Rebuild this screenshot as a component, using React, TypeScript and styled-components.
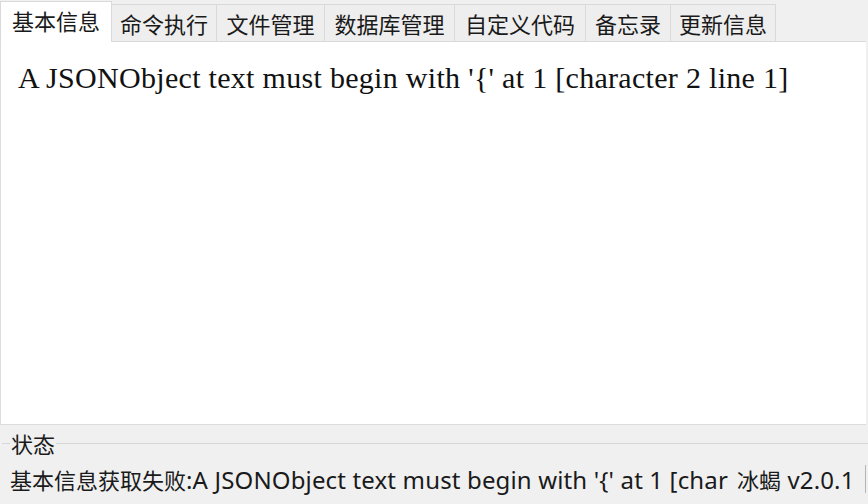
import React from "react";
import styled, { createGlobalStyle } from "styled-components";

const Global = createGlobalStyle`
  html, body { margin: 0; padding: 0; background: #f0f0f0; }
  body { width: 868px; height: 504px; overflow: hidden; }
`;

const Frame = styled.div`
  width: 868px;
  height: 504px;
  display: flex;
  flex-direction: column;
  background: #f0f0f0;
  font-family: "Noto Sans CJK SC", "Noto Sans", sans-serif;
  color: #1a1a1a;
`;

const TabBar = styled.div`
  height: 42px;
  flex: none;
  display: flex;
  align-items: flex-end;
  box-sizing: border-box;
  border-bottom: 1px solid #d9d9d9;
  width: 866px;
`;

const Tab = styled.div<{ $active?: boolean; $w: number }>`
  box-sizing: border-box;
  width: ${(p) => p.$w}px;
  height: ${(p) => (p.$active ? 41 : 37)}px;
  margin-bottom: ${(p) => (p.$active ? -1 : 0)}px;
  background: ${(p) => (p.$active ? "#ffffff" : "#eeeeee")};
  border: 1px solid #d9d9d9;
  border-bottom: none;
  border-left: ${(p) => (p.$active ? "1px solid #d9d9d9" : "none")};
  display: flex;
  align-items: center;
  justify-content: center;
  font-size: 22px;
  line-height: 1;
  padding-bottom: ${(p) => (p.$active ? 4 : 0)}px;
  color: #1a1a1a;
  position: relative;
  z-index: ${(p) => (p.$active ? 1 : 0)};
`;

const Content = styled.div`
  height: 383px;
  flex: none;
  width: 866px;
  box-sizing: border-box;
  background: #ffffff;
  border-left: 1px solid #dcdcdc;
  border-bottom: 1px solid #dcdcdc;
  padding: 19px 0 0 17px;
`;

const Message = styled.div`
  font-family: "Liberation Serif", "Times New Roman", serif;
  font-size: 30px;
  letter-spacing: 0.3px;
  line-height: 34px;
  color: #111;
`;

const StatusPanel = styled.fieldset`
  height: 73px;
  flex: none;
  box-sizing: border-box;
  border: none;
  border-top: 1px solid #d8d8d8;
  padding: 0;
  margin: 6px 0 0 2px;
  display: flex;
  flex-direction: column;
`;

const Legend = styled.legend`
  font-size: 22px;
  line-height: 24px;
  padding: 0 1px;
  margin-left: 8px;
  color: #1a1a1a;
`;

const StatusRow = styled.div`
  display: flex;
  align-items: center;
  height: 40px;
  margin-top: 4px;
  font-size: 22px;
  white-space: nowrap;
`;

const StatusText = styled.div`
  width: 718px;
  overflow: hidden;
  text-overflow: clip;
  padding-left: 8px;
  box-sizing: content-box;
`;

const Latin = styled.span`
  font-family: "Noto Sans", sans-serif;
  font-size: 24px;
  letter-spacing: 0.15px;
`;

const Version = styled.div`
  padding-left: 9px;
`;

const Separator = styled.div`
  width: 1px;
  height: 28px;
  background: #b5b5b5;
  margin-left: 10px;
`;

const tabs: [string, number][] = [
  ["基本信息", 112],
  ["命令执行", 105],
  ["文件管理", 108],
  ["数据库管理", 130],
  ["自定义代码", 131],
  ["备忘录", 85],
  ["更新信息", 105],
];

export default function App() {
  return (
    <Frame>
      <Global />
      <TabBar>
        {tabs.map(([t, w], i) => (
          <Tab key={t} $active={i === 0} $w={w}>
            {t}
          </Tab>
        ))}
      </TabBar>
      <Content>
        <Message>A JSONObject text must begin with '{"{"}' at 1 [character 2 line 1]</Message>
      </Content>
      <StatusPanel>
        <Legend>状态</Legend>
        <StatusRow>
          <StatusText>
            基本信息获取失败<Latin>:A JSONObject text must begin with '{"{"}' at 1 [character 2 line 1]</Latin>
          </StatusText>
          <Version>
            冰蝎<Latin> v2.0.1</Latin>
          </Version>
          <Separator />
        </StatusRow>
      </StatusPanel>
    </Frame>
  );
}
